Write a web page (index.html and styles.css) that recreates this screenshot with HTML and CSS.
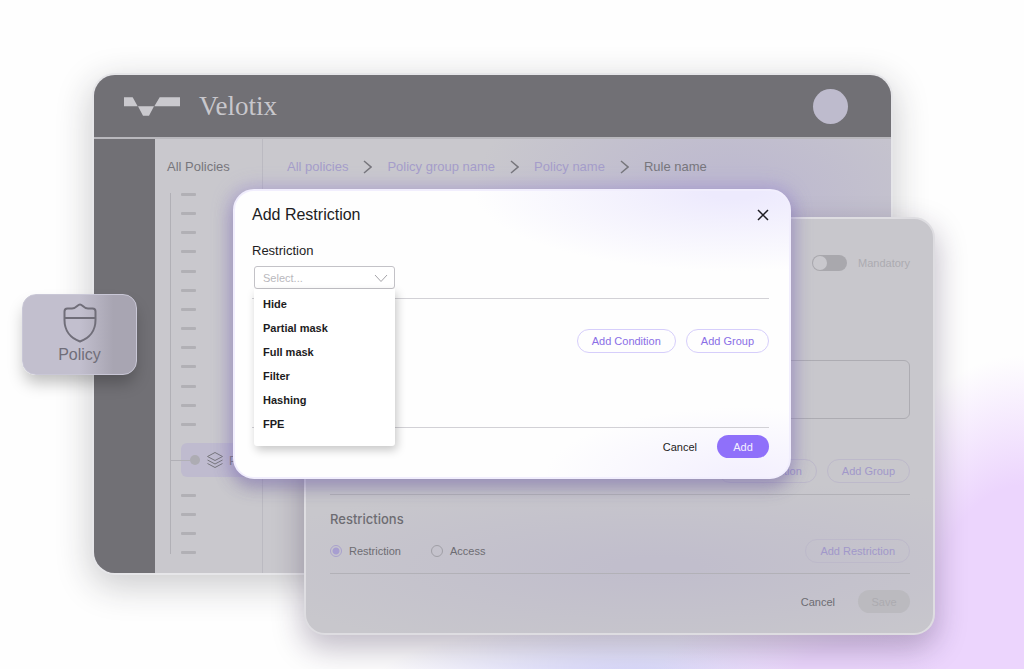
FILE: index.html
```html
<!DOCTYPE html>
<html lang="en">

<head>
    <meta charset="UTF-8">
    <meta name="viewport" content="width=device-width, initial-scale=1.0">
    <title>Velotix - Add Restriction</title>

    <link rel="stylesheet" href="styles.css">
</head>

<body>
    <div class="stage">
        <div class="app">
            <header class="topbar">
                <svg class="logo" viewBox="0 0 168 56" aria-hidden="true">
                    <path d="M0 0H26L41 27H0ZM107 0H168V27H91ZM42 27H90L75 56H57Z" />
                </svg>
                <span class="brand">Velotix</span>
                <div class="avatar"></div>
            </header>
            <div class="app-body">
                <div class="rail"></div>
                <aside class="policies">
                    <h2>All Policies</h2>
                    <div class="tree">
                        <ul class="ticks">
                            <li></li><li></li><li></li><li></li><li></li><li></li><li></li>
                            <li></li><li></li><li></li><li></li><li></li><li></li>
                        </ul>
                        <div class="tree-current">
                            <span class="dot"></span>
                            <svg width="18" height="18" viewBox="0 0 18 18" aria-hidden="true">
                                <path d="M9 1.5L16.500 5.500L9 9.500L1.500 5.500ZM1.500 9L9 13L16.500 9M1.500 12.500L9 16.500L16.500 12.500" />
                            </svg>
                            <span>P</span>
                        </div>
                        <ul class="ticks ticks-end">
                            <li></li><li></li><li></li><li></li>
                        </ul>
                    </div>
                </aside>
                <main>
                    <nav class="breadcrumb">
                        <a href="#">All policies</a>
                        <svg width="9" height="14" viewBox="0 0 9 14" aria-hidden="true"><path d="M1 1L8 7L1 13" /></svg>
                        <a href="#">Policy group name</a>
                        <svg width="9" height="14" viewBox="0 0 9 14" aria-hidden="true"><path d="M1 1L8 7L1 13" /></svg>
                        <a href="#">Policy name</a>
                        <svg width="9" height="14" viewBox="0 0 9 14" aria-hidden="true"><path d="M1 1L8 7L1 13" /></svg>
                        <span>Rule name</span>
                    </nav>
                </main>
            </div>
        </div>

        <section class="panel">
            <label class="mandatory"><input class="toggle" type="checkbox">Mandatory</label>
            <textarea class="description" aria-label="Description"></textarea>
            <div class="actions">
                <button class="pill" type="button">Add Condition</button>
                <button class="pill" type="button">Add Group</button>
            </div>
            <hr>
            <h2>Restrictions</h2>
            <div class="kinds">
                <label><input type="radio" name="kind" checked>Restriction</label>
                <label><input type="radio" name="kind">Access</label>
                <button class="pill" type="button">Add Restriction</button>
            </div>
            <hr>
            <footer>
                <button class="plain" type="button">Cancel</button>
                <button class="solid" type="button" disabled>Save</button>
            </footer>
        </section>

        <div class="badge">
            <svg width="34" height="40" viewBox="0 0 34 40" aria-hidden="true">
                <path d="M17 1.500C14.500 1.500 13.500 5.500 9 5.500H4.500Q1.500 5.500 1.500 8.500V17C1.500 27 7 35 17 38.500C27 35 32.500 27 32.500 17V8.500Q32.500 5.500 29.500 5.500H25C20.500 5.500 19.500 1.500 17 1.500ZM1.500 15H32.500" />
            </svg>
            <span>Policy</span>
        </div>

        <section class="dialog" role="dialog" aria-labelledby="dialog-title">
            <div class="dialog-head">
                <h1 id="dialog-title">Add Restriction</h1>
                <button class="close" type="button" aria-label="Close">
                    <svg width="12" height="12" viewBox="0 0 12 12"><path d="M1 1L11 11M11 1L1 11" /></svg>
                </button>
            </div>
            <label class="field-label" for="restriction">Restriction</label>
            <div class="field">
                <select id="restriction">
                    <option>Select...</option>
                </select>
                <svg class="chevron" width="14" height="9" viewBox="0 0 14 9" aria-hidden="true"><path d="M1 1L7 7.500L13 1" /></svg>
                <ul class="menu">
                    <li>Hide</li>
                    <li>Partial mask</li>
                    <li>Full mask</li>
                    <li>Filter</li>
                    <li>Hashing</li>
                    <li>FPE</li>
                </ul>
            </div>
            <hr>
            <div class="actions">
                <button class="pill" type="button">Add Condition</button>
                <button class="pill" type="button">Add Group</button>
            </div>
            <hr>
            <footer>
                <button class="plain" type="button">Cancel</button>
                <button class="solid" type="button">Add</button>
            </footer>
        </section>
    </div>
</body>

</html>
```
FILE: styles.css
```css
* {
    box-sizing: border-box;
    margin: 0;
    padding: 0;
}

body {
    font-family: "Liberation Sans", Arial, sans-serif;
    font-size: 11px;
    color: #1d1c22;
    background-color: #fefefe;
}

button,
select,
textarea {
    font: inherit;
    color: inherit;
}

ul {
    list-style: none;
}

svg {
    fill: none;
    stroke: currentColor;
    flex-shrink: 0;
}

hr {
    border: 0;
    border-top: 1px solid #d2d1d6;
}

.stage {
    position: relative;
    min-height: 100vh;
    padding: 75px 133px 96px 94px;
    overflow: hidden;
    background:
        radial-gradient(ellipse 180px 260px at 100% 92%, #ecd5fd 50%, rgba(230, 218, 253, 0) 100%),
        radial-gradient(ellipse 200px 80px at 84% 100%, #ead5fb 30%, rgba(234, 213, 251, 0) 100%),
        radial-gradient(ellipse 260px 60px at 62% 102%, #d5d5fb 10%, rgba(213, 213, 251, 0) 100%),
        #fefefe;
}

/* main window */

.app {
    border-radius: 21px;
    color: #77767c;
    background-color: #c9c8cd;
    box-shadow: 0 0 0 2px #e6e6e9, 0 10px 34px 4px rgba(30, 30, 40, 0.22);
}

.topbar {
    display: flex;
    align-items: center;
    height: 62px;
    padding: 0 43px 0 30px;
    border-radius: 21px 21px 0 0;
    background-color: #717075;
}

.logo {
    width: 56px;
    height: 19px;
    fill: #cac9ce;
    stroke: none;
}

.brand {
    margin-left: 19px;
    font-family: "Liberation Serif", serif;
    font-size: 27px;
    color: #c8c7cc;
}

.avatar {
    width: 35px;
    height: 35px;
    margin-left: auto;
    border-radius: 50%;
    background-color: #bebbcd;
}

.app-body {
    display: flex;
    min-height: 436px;
    border-top: 2px solid #b9b8bd;
    border-radius: 0 0 21px 21px;
    background: radial-gradient(ellipse 260px 150px at 80% 14%, #bebacf 20%, rgba(190, 186, 207, 0) 100%);
}

.rail {
    width: 61px;
    border-radius: 0 0 0 21px;
    background-color: #717075;
}

.policies {
    width: 108px;
    border-right: 1px solid #bbbac1;
}

.policies h2 {
    padding: 18px 0 0 12px;
    font-size: 13px;
    font-weight: 400;
    line-height: 20px;
}

.tree {
    margin: 16px 0 0 15px;
    border-left: 1px solid #b1b0b6;
}

.ticks {
    display: flex;
    flex-direction: column;
    justify-content: space-between;
    height: 233px;
    padding-left: 10px;
}

.ticks-end {
    height: 60px;
}

.ticks li {
    width: 15px;
    height: 3px;
    border-radius: 1px;
    background-color: #b1b0b5;
}

.tree-current {
    display: flex;
    align-items: center;
    height: 34px;
    margin: 17px 0 17px 10px;
    padding-left: 9px;
    border-radius: 6px;
    font-size: 13px;
    background-color: #bfbbcf;
}

.tree-current::before {
    content: "";
    width: 20px;
    height: 1px;
    margin-left: -20px;
    background-color: #b1b0b6;
}

.tree-current .dot {
    width: 10px;
    height: 10px;
    margin-right: 6px;
    border-radius: 50%;
    background-color: #adacb3;
}

.tree-current svg {
    margin-right: 5px;
}

.breadcrumb {
    display: flex;
    align-items: center;
    gap: 15px;
    padding: 18px 0 0 24px;
    font-size: 13px;
    line-height: 20px;
    white-space: nowrap;
}

.breadcrumb a {
    color: #a59dca;
    text-decoration: none;
}

.breadcrumb svg {
    stroke-width: 1.5;
}

/* shared controls */

.actions,
.panel footer,
.dialog footer {
    display: flex;
    justify-content: flex-end;
    align-items: center;
    gap: 10px;
}

.pill {
    height: 24px;
    padding: 0 14px;
    border: 1px solid #d6cefb;
    border-radius: 12px;
    color: #8a6ee6;
    background-color: transparent;
}

.plain {
    height: 23px;
    border: 0;
    background-color: transparent;
}

.solid {
    width: 52px;
    height: 23px;
    margin-left: 10px;
    border: 0;
    border-radius: 12px;
    color: #f3efff;
    background-color: #8f70fa;
}

/* rule panel */

.panel {
    position: absolute;
    top: 217px;
    left: 304px;
    right: 89px;
    padding: 32px 23px 20px 24px;
    border: 2px solid #dedde1;
    border-radius: 21px;
    color: #6d6c72;
    background:
        radial-gradient(ellipse 420px 90px at 56% 84%, #c1becc 10%, rgba(193, 190, 204, 0) 100%),
        #c8c7cc;
    box-shadow: 0 12px 30px 2px rgba(40, 20, 60, 0.28);
}

.panel hr {
    border-color: #b2b1b7;
}

.mandatory {
    display: flex;
    align-items: center;
    justify-content: flex-end;
    gap: 11px;
    height: 24px;
    color: #acabb1;
}

.toggle {
    appearance: none;
    display: flex;
    align-items: center;
    width: 35px;
    height: 16px;
    padding: 1px;
    border-radius: 8px;
    background-color: #a9a8ad;
}

.toggle::before {
    content: "";
    width: 14px;
    height: 14px;
    border-radius: 50%;
    background-color: #c9c8cd;
}

.description {
    display: block;
    width: 100%;
    height: 59px;
    margin: 85px 0 40px;
    border: 1px solid #adacb2;
    border-radius: 6px;
    resize: none;
    background-color: transparent;
}

.panel .pill {
    border-color: #bdb9ca;
    color: #a198ca;
}

.panel .actions {
    margin-bottom: 11px;
}

.panel h2 {
    margin-top: 14px;
    font-family: Inter, sans-serif;
    font-size: 13px;
    font-weight: 500;
    line-height: 20px;
}

.kinds {
    display: flex;
    align-items: center;
    gap: 30px;
    margin: 10px 0;
}

.kinds label {
    display: flex;
    align-items: center;
    gap: 7px;
}

.kinds .pill {
    margin-left: auto;
}

.kinds input {
    appearance: none;
    width: 12px;
    height: 12px;
    border: 1px solid #a09fa6;
    border-radius: 50%;
}

.kinds input:checked {
    border-color: #a9a1cc;
    background: radial-gradient(circle, #a79ed0 3px, transparent 4px);
}

.panel footer {
    margin-top: 16px;
}

.solid:disabled {
    color: #acabb0;
    background-color: #bbbabf;
}

.panel .solid {
    margin-left: 13px;
}

/* policy badge */

.badge {
    position: absolute;
    top: 294px;
    left: 22px;
    display: flex;
    flex-direction: column;
    align-items: center;
    width: 115px;
    height: 81px;
    padding-top: 8px;
    border: 1px solid #c9c7d6;
    border-radius: 14px;
    font-size: 16px;
    line-height: 24px;
    color: #706e79;
    background: linear-gradient(to right, #c2bfce 50%, #a8a5b2 80%);
    box-shadow: 0 10px 16px -2px rgba(0, 0, 0, 0.25);
}

.badge svg {
    stroke-width: 2;
}

/* add restriction dialog */

.dialog {
    position: absolute;
    top: 189px;
    left: 233px;
    right: 233px;
    padding: 12px 20px 19px 17px;
    border: 2px solid #f1eefd;
    border-radius: 21px;
    background:
        radial-gradient(ellipse 260px 80px at 90% 0, #edeafd 10%, rgba(237, 234, 253, 0) 100%),
        radial-gradient(ellipse 200px 70px at 92% 100%, #f4f1fe 10%, rgba(244, 241, 254, 0) 100%),
        #fefefe;
    box-shadow: 0 0 18px 3px rgba(158, 138, 224, 0.4), 0 8px 18px rgba(60, 50, 100, 0.35);
}

.dialog-head {
    display: flex;
    align-items: center;
    justify-content: space-between;
    height: 24px;
}

.dialog h1 {
    font-size: 16px;
    font-weight: 400;
    line-height: 24px;
}

.close {
    width: 12px;
    height: 12px;
    border: 0;
    background: none;
}

.close svg {
    display: block;
    stroke-width: 1.5;
}

.field-label {
    display: block;
    margin-top: 14px;
    font-size: 13px;
    line-height: 20px;
}

.field {
    position: relative;
    width: 141px;
    margin: 5px 0 9px 2px;
}

.field select {
    appearance: none;
    display: block;
    width: 100%;
    height: 23px;
    padding: 0 8px;
    border: 1px solid #c3c2c7;
    border-radius: 3px;
    color: #b9b8bd;
    background-color: #ffffff;
}

.chevron {
    position: absolute;
    top: 8px;
    right: 7px;
    color: #a4a3a8;
}

.menu {
    position: absolute;
    top: 100%;
    left: 0;
    width: 100%;
    padding: 3px 9px 10px;
    border-radius: 0 0 3px 3px;
    font-weight: 700;
    line-height: 24px;
    background-color: #ffffff;
    box-shadow: 2px 4px 10px rgba(0, 0, 0, 0.22);
}

.dialog .actions {
    margin: 30px 0 74px;
}

.dialog footer {
    margin-top: 7px;
}
```
